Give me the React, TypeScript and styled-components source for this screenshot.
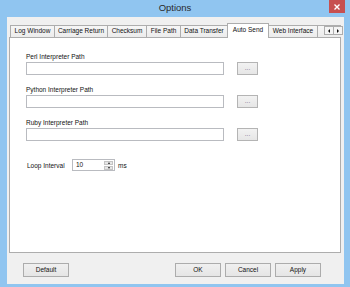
import React from 'react'
import styled, { createGlobalStyle } from 'styled-components'

const GlobalStyle = createGlobalStyle`
  html, body {
    margin: 0;
    padding: 0;
  }
  body {
    width: 350px;
    height: 287px;
    overflow: hidden;
    background: #90c5f0;
    font-family: "Liberation Sans", Arial, sans-serif;
  }
`

const Window = styled.div`
  width: 350px;
  height: 287px;
  display: flex;
  flex-direction: column;
  background: #90c5f0;
`

const TitleBar = styled.div`
  height: 17px;
  display: grid;
  grid-template-columns: 1fr auto 1fr;
  align-items: start;
`

const Title = styled.div`
  font-size: 9.5px;
  line-height: 16px;
  color: #2a2a2a;
`

const CloseButton = styled.div`
  justify-self: end;
  margin-right: 5px;
  width: 16px;
  height: 13px;
  background: #c75050;
  display: flex;
  align-items: center;
  justify-content: center;
`

const Client = styled.div`
  flex: 1;
  margin: 0 6px 3px 7px;
  background: #f0f0f0;
  display: flex;
  flex-direction: column;
`

const TabControl = styled.div`
  margin: 6px 3px 0 2px;
  display: flex;
  flex-direction: column;
`

const TabStrip = styled.div`
  position: relative;
  height: 15px;
  margin-bottom: -1px;
  z-index: 1;
`

const TabRow = styled.div`
  height: 15px;
  display: flex;
  align-items: flex-start;
  padding-left: 2px;
  overflow: hidden;
`

const Tab = styled.div<{ $w: number; $active?: boolean }>`
  flex: none;
  box-sizing: border-box;
  width: ${p => p.$w}px;
  height: ${p => (p.$active ? 15 : 12)}px;
  margin-top: ${p => (p.$active ? 0 : 2)}px;
  margin-left: -1px;
  border: 1px solid #adadad;
  border-bottom: none;
  background: ${p => (p.$active ? '#fff' : 'linear-gradient(#f6f6f6, #ececec)')};
  position: relative;
  z-index: ${p => (p.$active ? 2 : 1)};
  font-size: 6.5px;
  line-height: ${p => (p.$active ? 11 : 10)}px;
  text-align: center;
  color: #111;
  white-space: nowrap;
`

const ScrollArrows = styled.div`
  position: absolute;
  right: -2px;
  top: 3px;
  display: flex;
  z-index: 3;
`

const ArrowButton = styled.div`
  box-sizing: border-box;
  width: 10px;
  height: 9px;
  margin-left: -1px;
  border: 1px solid #adadad;
  background: #f4f4f4;
  display: flex;
  align-items: center;
  justify-content: center;
`

const Triangle = styled.div<{ $dir: 'left' | 'right' | 'up' | 'down' }>`
  width: 0;
  height: 0;
  border: 2px solid transparent;
  ${p => p.$dir === 'left' && 'border-right: 2px solid #111; border-left-width: 0;'}
  ${p => p.$dir === 'right' && 'border-left: 2px solid #111; border-right-width: 0;'}
  ${p => p.$dir === 'up' && 'border-bottom: 2px solid #222; border-top-width: 0; border-left-width: 1.5px; border-right-width: 1.5px;'}
  ${p => p.$dir === 'down' && 'border-top: 2px solid #222; border-bottom-width: 0; border-left-width: 1.5px; border-right-width: 1.5px;'}
`

const Panel = styled.div`
  height: 216px;
  box-sizing: border-box;
  border: 1px solid #adadad;
  background: #fff;
  padding: 14px 0 0 16px;
  display: flex;
  flex-direction: column;
`

const FieldGroup = styled.div`
  display: flex;
  flex-direction: column;
  margin-bottom: 10px;
`

const Label = styled.div`
  font-size: 6.5px;
  line-height: 9px;
  margin-bottom: 1px;
  color: #111;
  white-space: nowrap;
`

const FieldRow = styled.div`
  display: flex;
  align-items: center;
  gap: 13px;
`

const PathInput = styled.div`
  box-sizing: border-box;
  width: 198px;
  height: 13px;
  border: 1px solid #b9bbc0;
  background: #fff;
`

const BrowseButton = styled.div`
  box-sizing: border-box;
  width: 21px;
  height: 13px;
  border: 1px solid #b4b4b4;
  background: linear-gradient(#f2f2f2, #e6e6e6);
  font-size: 6.5px;
  line-height: 10px;
  text-align: center;
  color: #7a6f92;
`

const LoopRow = styled.div`
  display: flex;
  align-items: center;
  margin-top: 8px;
  padding-left: 1px;
  font-size: 6.5px;
  color: #111;
`

const LoopLabel = styled.div`
  width: 45px;
`

const NumberBox = styled.div`
  box-sizing: border-box;
  width: 43px;
  height: 12px;
  border: 1px solid #b9bbc0;
  display: flex;
  align-items: stretch;
  padding: 1px;
`

const NumberValue = styled.div`
  flex: 1;
  line-height: 8px;
  padding-left: 2px;
`

const Spinner = styled.div`
  width: 9px;
  display: flex;
  flex-direction: column;
  gap: 1px;
`

const SpinHalf = styled.div`
  flex: 1;
  background: #e6e6e6;
  border: 1px solid #c4c4c4;
  display: flex;
  align-items: center;
  justify-content: center;
`

const Unit = styled.div`
  margin-left: 3px;
`

const Footer = styled.div`
  display: flex;
  align-items: center;
  padding: 10px 23px 7px 16px;
`

const ButtonGroup = styled.div`
  margin-left: auto;
  display: flex;
  gap: 4px;
`

const DialogButton = styled.div`
  box-sizing: border-box;
  width: 46px;
  height: 14px;
  border: 1px solid #acacac;
  background: linear-gradient(#f0f0f0, #e5e5e5);
  font-size: 6.5px;
  line-height: 12px;
  text-align: center;
  color: #111;
`

const tabs = [
  { label: 'Log Window', w: 45 },
  { label: 'Carriage Return', w: 54 },
  { label: 'Checksum', w: 40 },
  { label: 'File Path', w: 35 },
  { label: 'Data Transfer', w: 48 },
  { label: 'Auto Send', w: 42, active: true },
  { label: 'Web Interface', w: 50 },
  { label: '', w: 40 },
]

const paths = ['Perl Interpreter Path', 'Python Interpreter Path', 'Ruby Interpreter Path']

export default function App() {
  return (
    <Window>
      <GlobalStyle />
      <TitleBar>
        <div />
        <Title>Options</Title>
        <CloseButton>
          <svg width="6" height="6" viewBox="0 0 6 6">
            <path d="M0.5 0.5L5.5 5.5M5.5 0.5L0.5 5.5" stroke="#fff" strokeWidth="1.4" />
          </svg>
        </CloseButton>
      </TitleBar>
      <Client>
        <TabControl>
          <TabStrip>
            <TabRow>
              {tabs.map((t, i) => (
                <Tab key={i} $w={t.w} $active={t.active}>
                  {t.label}
                </Tab>
              ))}
            </TabRow>
            <ScrollArrows>
              <ArrowButton>
                <Triangle $dir="left" />
              </ArrowButton>
              <ArrowButton>
                <Triangle $dir="right" />
              </ArrowButton>
            </ScrollArrows>
          </TabStrip>
          <Panel>
            {paths.map(p => (
              <FieldGroup key={p}>
                <Label>{p}</Label>
                <FieldRow>
                  <PathInput />
                  <BrowseButton>...</BrowseButton>
                </FieldRow>
              </FieldGroup>
            ))}
            <LoopRow>
              <LoopLabel>Loop Interval</LoopLabel>
              <NumberBox>
                <NumberValue>10</NumberValue>
                <Spinner>
                  <SpinHalf>
                    <Triangle $dir="up" />
                  </SpinHalf>
                  <SpinHalf>
                    <Triangle $dir="down" />
                  </SpinHalf>
                </Spinner>
              </NumberBox>
              <Unit>ms</Unit>
            </LoopRow>
          </Panel>
        </TabControl>
        <Footer>
          <DialogButton>Default</DialogButton>
          <ButtonGroup>
            <DialogButton>OK</DialogButton>
            <DialogButton>Cancel</DialogButton>
            <DialogButton>Apply</DialogButton>
          </ButtonGroup>
        </Footer>
      </Client>
    </Window>
  )
}
